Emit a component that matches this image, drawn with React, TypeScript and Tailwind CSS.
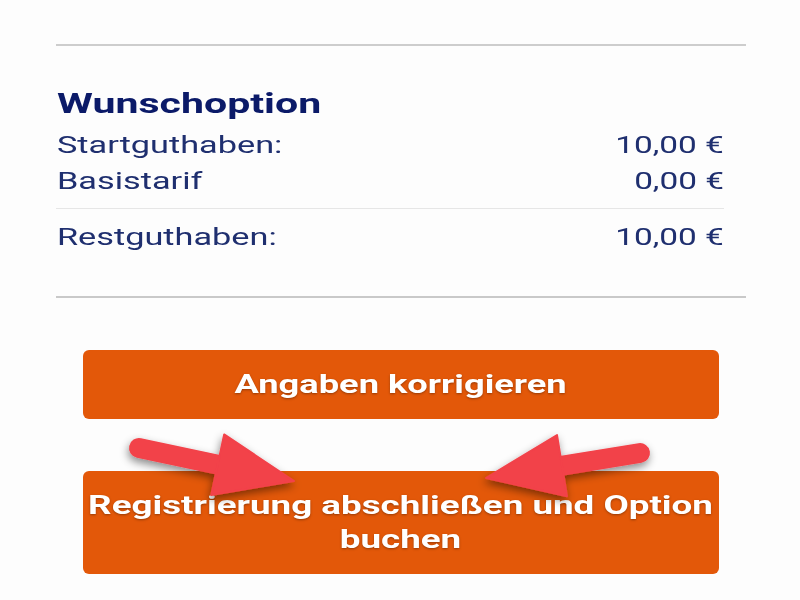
import React from 'react';

const rows = [
  { label: 'Startguthaben:', value: '10,00 €' },
  { label: 'Basistarif', value: '0,00 €' },
];

type Pt = [number, number];

const Arrow = ({ tail, tip, headLen, headHalf, shaft }: { tail: Pt; tip: Pt; headLen: number; headHalf: number; shaft: number }) => {
  const dx = tip[0] - tail[0];
  const dy = tip[1] - tail[1];
  const len = Math.hypot(dx, dy);
  const ux = dx / len;
  const uy = dy / len;
  const nx = -uy;
  const ny = ux;
  const bx = tip[0] - ux * headLen;
  const by = tip[1] - uy * headLen;
  const pts = [
    `${tip[0]},${tip[1]}`,
    `${bx + nx * headHalf},${by + ny * headHalf}`,
    `${bx - nx * headHalf},${by - ny * headHalf}`,
  ].join(' ');
  return (
    <g filter="url(#arrowShadow)">
      <line
        x1={tail[0]}
        y1={tail[1]}
        x2={bx + ux * 4}
        y2={by + uy * 4}
        stroke="#f2424a"
        strokeWidth={shaft}
        strokeLinecap="round"
      />
      <polygon points={pts} fill="#f2424a" strokeLinejoin="round" stroke="#f2424a" strokeWidth={2} />
    </g>
  );
};

export default function App() {
  return (
    <div className="relative w-[800px] h-[600px] overflow-hidden bg-[#fdfdfd] font-['Roboto',sans-serif]">
      <div className="pt-[44px] px-[56px] pr-[54px]">
        <div className="h-[2px] bg-[#cdcdcd]" />

        <div className="mt-[42px] pl-px">
          <h2 className="h-[32px] leading-[32px] text-[27px] font-bold text-[#0b1a68]">
            <span className="inline-block origin-left scale-x-[1.52]">Wunschoption</span>
          </h2>

          <div className="mt-[8px] pr-[22px] text-[23px] text-[#1f2f6f]">
            {rows.map((r) => (
              <div key={r.label} className="flex justify-between h-[36px] leading-[36px]">
                <span className="inline-block origin-left scale-x-[1.49]">{r.label}</span>
                <span className="inline-block origin-right scale-x-[1.45]">{r.value}</span>
              </div>
            ))}
            <div className="mt-[8px] h-px bg-[#e6e6e6] -ml-px" />
            <div className="mt-[11px] flex justify-between h-[36px] leading-[36px]">
              <span className="inline-block origin-left scale-x-[1.49]">Restguthaben:</span>
              <span className="inline-block origin-right scale-x-[1.45]">10,00 €</span>
            </div>
          </div>
        </div>

        <div className="mt-[40px] h-[2px] bg-[#c9c9c9]" />

        <div className="mt-[52px] px-[27px] flex flex-col gap-[52px]">
          <button className="h-[69px] w-full rounded-[6px] bg-[#e35809] text-white text-[25px] font-bold leading-[34px] [text-shadow:0_1px_2px_rgba(0,0,0,0.35)]">
            <span className="inline-block origin-center scale-x-[1.45]">Angaben korrigieren</span>
          </button>
          <button className="h-[103px] w-full rounded-[6px] bg-[#e35809] text-white text-[25px] font-bold leading-[34px] [text-shadow:0_1px_2px_rgba(0,0,0,0.35)]">
            <span className="inline-block origin-center scale-x-[1.47] text-center">
              Registrierung abschließen und Option
              <br />
              buchen
            </span>
          </button>
        </div>
      </div>

      <svg className="absolute inset-0 pointer-events-none" width="800" height="600" viewBox="0 0 800 600">
        <defs>
          <filter id="arrowShadow" x="-20%" y="-40%" width="140%" height="180%">
            <feDropShadow dx="-1" dy="4" stdDeviation="4" floodColor="#000" floodOpacity="0.45" />
          </filter>
        </defs>
        <Arrow tail={[139, 448]} tip={[294, 481]} headLen={78} headHalf={31} shaft={20} />
        <Arrow tail={[640, 453]} tip={[486, 478]} headLen={77} headHalf={31} shaft={20} />
      </svg>
    </div>
  );
}
